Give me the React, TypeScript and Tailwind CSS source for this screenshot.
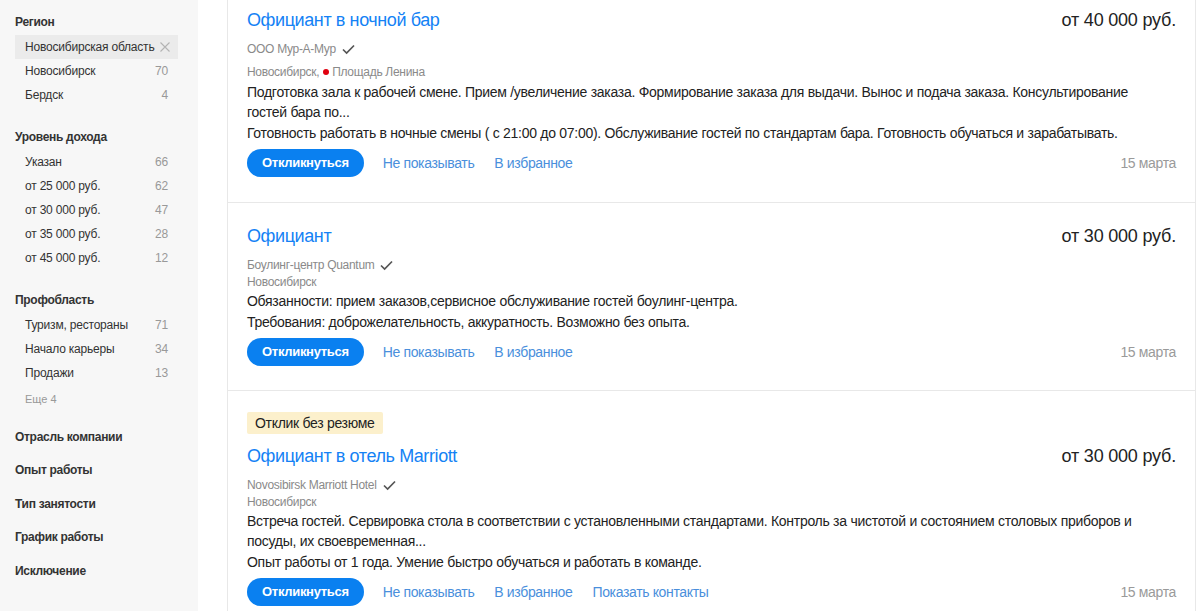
import React from "react";

interface FilterItem {
  label: string;
  count?: number;
  selected?: boolean;
}

interface Vacancy {
  id: number;
  badge?: string;
  title: string;
  salary: string;
  company: string;
  city: string;
  metro?: string;
  paragraphs: React.ReactNode[];
  contacts?: boolean;
  date: string;
}

const region: FilterItem[] = [
  { label: "Новосибирская область", selected: true },
  { label: "Новосибирск", count: 70 },
  { label: "Бердск", count: 4 },
];

const income: FilterItem[] = [
  { label: "Указан", count: 66 },
  { label: "от 25 000 руб.", count: 62 },
  { label: "от 30 000 руб.", count: 47 },
  { label: "от 35 000 руб.", count: 28 },
  { label: "от 45 000 руб.", count: 12 },
];

const prof: FilterItem[] = [
  { label: "Туризм, рестораны", count: 71 },
  { label: "Начало карьеры", count: 34 },
  { label: "Продажи", count: 13 },
];

const collapsed = ["Отрасль компании", "Опыт работы", "Тип занятости", "График работы", "Исключение"];

const vacancies: Vacancy[] = [
  {
    id: 1,
    title: "Официант в ночной бар",
    salary: "от 40 000 руб.",
    company: "ООО Мур-А-Мур",
    city: "Новосибирск,",
    metro: "Площадь Ленина",
    paragraphs: [
      <>
        Подготовка зала к рабочей смене. Прием /увеличение заказа. Формирование заказа для выдачи. Вынос и подача заказа. Консультирование
        <br />
        гостей бара по...
      </>,
      "Готовность работать в ночные смены ( с 21:00 до 07:00). Обслуживание гостей по стандартам бара. Готовность обучаться и зарабатывать.",
    ],
    date: "15 марта",
  },
  {
    id: 2,
    title: "Официант",
    salary: "от 30 000 руб.",
    company: "Боулинг-центр Quantum",
    city: "Новосибирск",
    paragraphs: [
      "Обязанности: прием заказов,сервисное обслуживание гостей боулинг-центра.",
      "Требования: доброжелательность, аккуратность. Возможно без опыта.",
    ],
    date: "15 марта",
  },
  {
    id: 3,
    badge: "Отклик без резюме",
    title: "Официант в отель Marriott",
    salary: "от 30 000 руб.",
    company: "Novosibirsk Marriott Hotel",
    city: "Новосибирск",
    paragraphs: [
      <>
        Встреча гостей. Сервировка стола в соответствии с установленными стандартами. Контроль за чистотой и состоянием столовых приборов и
        <br />
        посуды, их своевременная...
      </>,
      "Опыт работы от 1 года. Умение быстро обучаться и работать в команде.",
    ],
    contacts: true,
    date: "15 марта",
  },
];

function Check() {
  return (
    <svg width="13" height="11" viewBox="0 0 13 11" fill="none" className="ml-[6px]">
      <path d="M1 5.5 L4.6 9 L12 1.5" stroke="#555" strokeWidth="1.7" />
    </svg>
  );
}

function FilterRow({ item }: { item: FilterItem }) {
  return (
    <div
      className={`flex h-6 items-center justify-between pl-[10px] pr-[10px] text-[12px] tracking-[-0.2px] ${
        item.selected ? "bg-[#ebebeb]" : ""
      }`}
    >
      <span className="text-[#333]">{item.label}</span>
      {item.selected ? (
        <svg width="10" height="10" viewBox="0 0 10 10" className="-mr-[2px]">
          <path d="M0.5 0.5 L9.5 9.5 M9.5 0.5 L0.5 9.5" stroke="#b3b3b3" strokeWidth="1.1" />
        </svg>
      ) : (
        <span className="text-[#999]">{item.count}</span>
      )}
    </div>
  );
}

function Sidebar() {
  const head = "text-[12px] font-bold leading-[18px] tracking-[-0.3px] text-[#333]";
  return (
    <aside className="w-[198px] shrink-0 bg-[#f7f7f7] pl-[15px] pr-[20px] pt-[13px]">
      <h3 className={head}>Регион</h3>
      <div className="mt-1">
        {region.map((i) => (
          <FilterRow key={i.label} item={i} />
        ))}
      </div>

      <h3 className={`mt-[21px] ${head}`}>Уровень дохода</h3>
      <div className="mt-1">
        {income.map((i) => (
          <FilterRow key={i.label} item={i} />
        ))}
      </div>

      <h3 className={`mt-[21px] ${head}`}>Профобласть</h3>
      <div className="mt-1">
        {prof.map((i) => (
          <FilterRow key={i.label} item={i} />
        ))}
      </div>
      <div className="mt-[5px] pl-[10px] text-[11px] leading-[18px] text-[#999]">Еще 4</div>

      <div className="pt-1">
        {collapsed.map((c) => (
          <h3 key={c} className={`mt-[15.5px] ${head}`}>
            {c}
          </h3>
        ))}
      </div>
    </aside>
  );
}

function VacancyCard({ v, first }: { v: Vacancy; first?: boolean }) {
  return (
    <div
      className={`border-b border-[#e8e8e8] px-[19px] ${first ? "pt-2 pb-[25px]" : v.badge ? "pt-5 pb-6" : "pt-[21px] pb-6"}`}
    >
      {v.badge && (
        <div className="inline-block h-[22px] rounded-[2px] bg-[#fcf0cc] px-2 text-[14px] leading-[22px] tracking-[-0.3px] text-[#222]">
          {v.badge}
        </div>
      )}
      <div className={`flex items-baseline justify-between ${v.badge ? "mt-[9px]" : ""}`}>
        <a className="text-[18px] leading-6 tracking-[-0.4px] text-[#1482f5]">{v.title}</a>
        <span className="text-[18px] leading-6 tracking-[-0.2px] text-[#222]">{v.salary}</span>
      </div>
      <div className="mt-2 flex items-center text-[12px] leading-[18px] tracking-[-0.3px] text-[#8a8a8a]">
        {v.company}
        <Check />
      </div>
      {v.metro ? (
        <div className="mt-1 flex items-center text-[12px] leading-5 tracking-[-0.3px] text-[#8a8a8a]">
          {v.city}
          <span className="ml-[4px] mr-[3px] inline-block h-[6px] w-[6px] rounded-full bg-[#e0000f]" />
          {v.metro}
        </div>
      ) : (
        <div className="text-[12px] leading-[17px] tracking-[-0.3px] text-[#8a8a8a]">{v.city}</div>
      )}
      <div className="text-[14px] leading-5 tracking-[-0.28px] text-[#222]">
        {v.paragraphs.map((p, idx) => (
          <p key={idx} className={idx > 0 ? "mt-px" : ""}>
            {p}
          </p>
        ))}
      </div>
      <div className="mt-1.5 flex items-center text-[14px] tracking-[-0.35px]">
        <button className="h-7 rounded-full bg-[#0a80f0] px-[15px] text-[13px] font-bold tracking-[-0.3px] text-white">
          Откликнуться
        </button>
        <a className="ml-[19px] text-[#4a8fdc]">Не показывать</a>
        <a className="ml-[20px] text-[#4a8fdc]">В избранное</a>
        {v.contacts && <a className="ml-[20px] text-[#4a8fdc]">Показать контакты</a>}
        <span className="ml-auto text-[#9a9a9a]">{v.date}</span>
      </div>
    </div>
  );
}

export default function App() {
  return (
    <div className="flex min-h-screen bg-white font-['Liberation_Sans',Arial,sans-serif]">
      <Sidebar />
      <main className="ml-[29px] w-[969px] self-start border-x border-[#e8e8e8]">
        {vacancies.map((v, idx) => (
          <VacancyCard key={v.id} v={v} first={idx === 0} />
        ))}
      </main>
    </div>
  );
}
